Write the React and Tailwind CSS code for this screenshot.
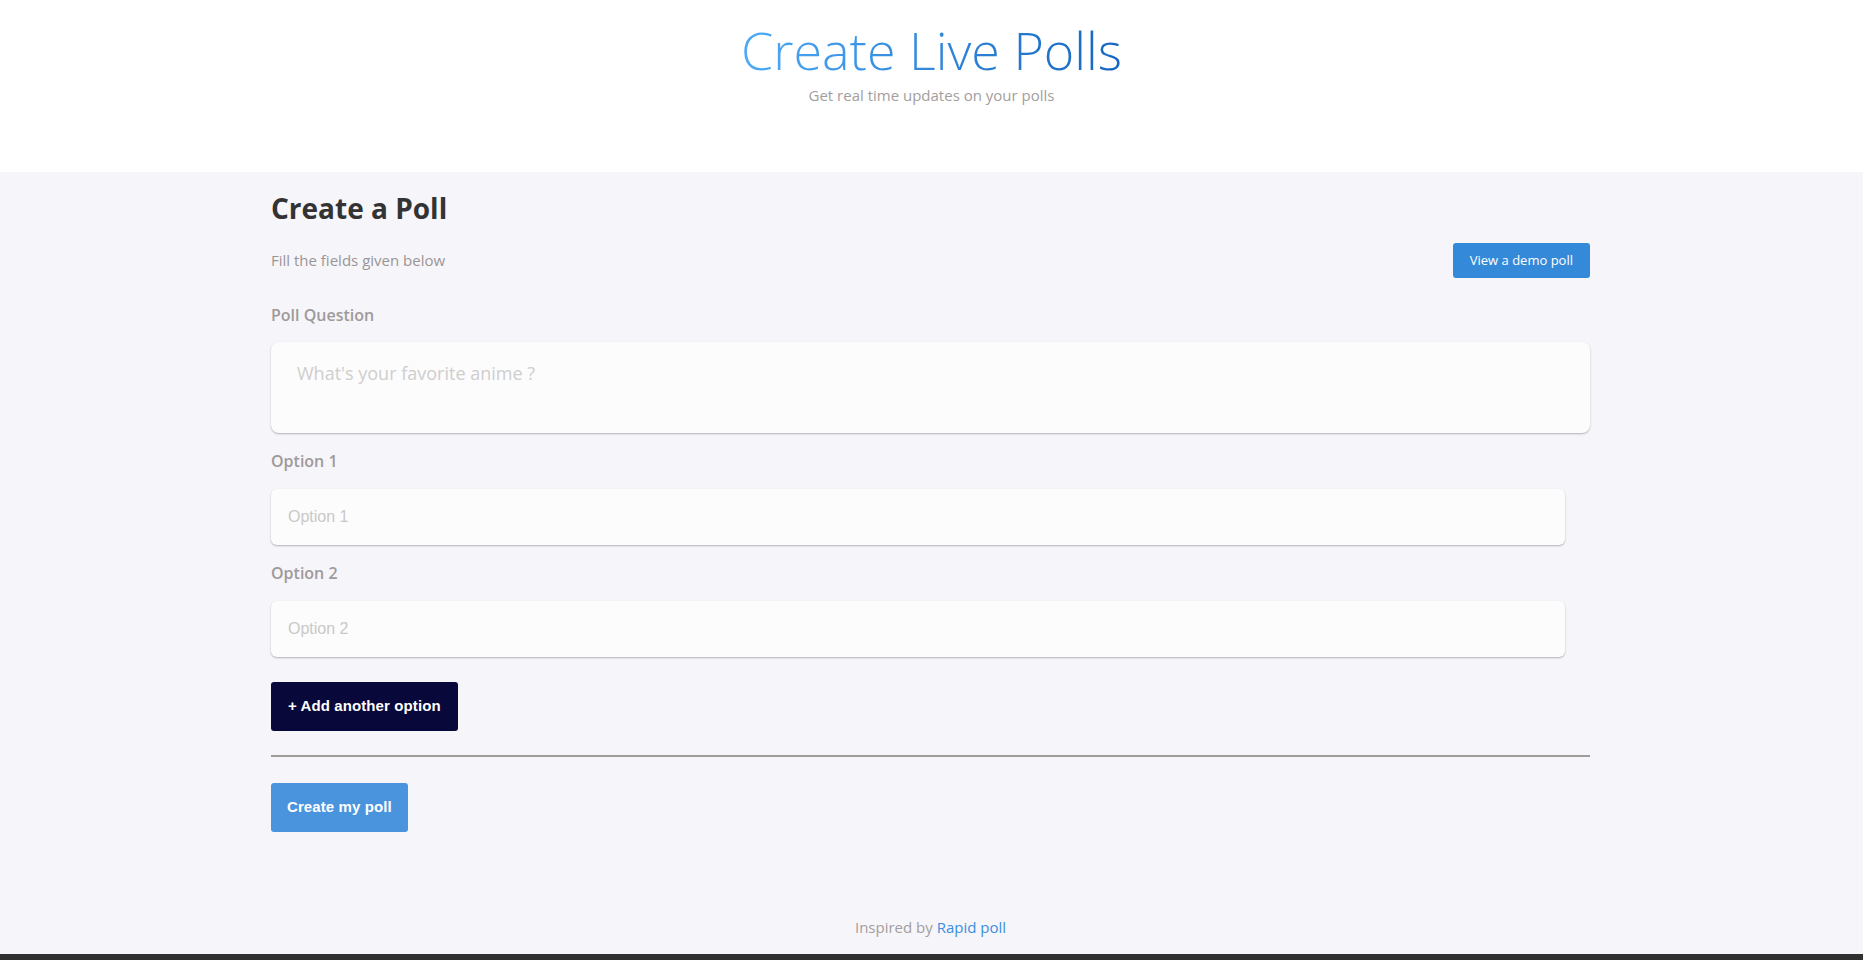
import React from "react";

export default function App() {
  const os = { fontFamily: '"Open Sans", "Noto Sans", sans-serif' };
  const ar = { fontFamily: '"Liberation Sans", Arial, sans-serif' };
  return (
    <div className="min-h-[960px] flex flex-col bg-[#f6f5fa]" style={os}>
      <header className="bg-white h-[172px] flex flex-col items-center pt-[19px]">
        <h1 className="text-[52px] leading-[62px] font-[350] bg-gradient-to-r from-[#4eaaf6] to-[#1466bf] bg-clip-text text-transparent">
          Create Live Polls
        </h1>
        <p className="text-[15px] leading-[20px] mt-[4px] text-[#a39e9e]">Get real time updates on your polls</p>
      </header>

      <main className="w-[1319px] ml-[271px] pt-[17px] flex-1 flex flex-col">
        <h2 className="text-[28px] leading-[38px] font-bold text-[#333]">Create a Poll</h2>
        <div className="mt-[16px] flex items-center justify-between h-[35px]">
          <p className="text-[15px] text-[#9a9595]">Fill the fields given below</p>
          <button className="h-[35px] px-[17px] rounded-[3px] bg-[#3589d9] text-white text-[13px]">View a demo poll</button>
        </div>

        <label className="mt-[25px] block text-[16px] leading-6 font-semibold text-[#9f9a9a]">Poll Question</label>
        <div className="mt-[15px] h-[91px] rounded-[8px] bg-[#fcfcfc] shadow-[0_1px_2px_rgba(0,0,0,0.28)] pl-[26px] pt-[19px]">
          <span className="block text-[18px] leading-6 text-[#cfcece]">What's your favorite anime ?</span>
        </div>

        {["Option 1", "Option 2"].map((o) => (
          <div key={o} className="flex flex-col">
            <label className="mt-[16px] block text-[16px] leading-6 font-semibold text-[#9f9a9a]">{o}</label>
            <div className="mt-[16px] w-[1294px] h-[56px] rounded-[6px] bg-[#fcfcfc] shadow-[0_1px_2px_rgba(0,0,0,0.28)] flex items-center pl-[17px]">
              <span className="text-[16px] text-[#c9c8c8]" style={ar}>{o}</span>
            </div>
          </div>
        ))}

        <div className="mt-[25px]">
          <button className="h-[49px] px-[17px] rounded-[3px] bg-[#08083a] text-white text-[15px] font-bold tracking-[0.1px]" style={ar}>
            + Add another option
          </button>
        </div>

        <div className="mt-[24px] border-t-[2px] border-[#a09c9c]" />

        <div className="mt-[26px]">
          <button className="h-[49px] px-[16px] rounded-[3px] bg-[#4a94de] text-white text-[15px] font-bold tracking-[0.1px]" style={ar}>
            Create my poll
          </button>
        </div>

        <footer className="mt-auto mb-[17px] text-center text-[15px] leading-[20px] text-[#a39e9e]">
          Inspired by <a className="text-[#3b8fe0]">Rapid poll</a>
        </footer>
      </main>
      <div className="h-[6px] bg-[#303030]" />
    </div>
  );
}
